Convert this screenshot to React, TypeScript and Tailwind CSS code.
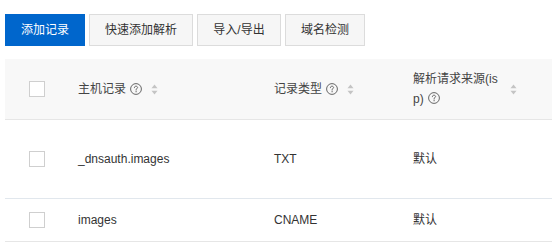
import React from "react";

const FONT = {
  fontFamily: '"Liberation Sans", "Noto Sans CJK SC", Arial, sans-serif',
};

function HelpIcon() {
  return (
    <svg width="12" height="12" viewBox="0 0 12 12" className="ml-1 shrink-0 inline-block align-[-1px]">
      <circle cx="6" cy="6" r="5.4" fill="none" stroke="#666" strokeWidth="1" />
      <path
        d="M4.4 4.7 C4.4 3.7 5.1 3.2 6 3.2 C6.9 3.2 7.6 3.8 7.6 4.6 C7.6 5.5 6.6 5.7 6.1 6.3 L6.1 7.1"
        fill="none"
        stroke="#666"
        strokeWidth="1"
        strokeLinecap="round"
      />
      <circle cx="6.1" cy="8.7" r="0.65" fill="#666" />
    </svg>
  );
}

function SortIcon() {
  return (
    <svg width="7" height="11" viewBox="0 0 7 11" className="shrink-0">
      <path d="M3.5 0.5 L6.5 4.3 L0.5 4.3 Z" fill="#c4c4c4" />
      <path d="M3.5 10.5 L6.5 6.7 L0.5 6.7 Z" fill="#c4c4c4" />
    </svg>
  );
}

function Checkbox() {
  return <div className="w-4 h-4 border border-[#cfcfcf] bg-white" />;
}

export default function App() {
  return (
    <div className="w-[552px] h-[250px] bg-white pl-[5px] pt-[14px] overflow-hidden" style={FONT}>
      <div className="flex gap-1">
        <button className="h-8 w-[80px] text-[12px] text-white bg-[#0066cc] border border-[#0066cc] leading-none">
          添加记录
        </button>
        <button className="h-8 w-[104px] text-[12px] text-[#333] bg-[#f6f6f6] border border-[#dcdcdc] leading-none">
          快速添加解析
        </button>
        <button className="h-8 w-[84px] text-[12px] text-[#333] bg-[#f6f6f6] border border-[#dcdcdc] leading-none">
          导入/导出
        </button>
        <button className="h-8 w-[80px] text-[12px] text-[#333] bg-[#f6f6f6] border border-[#dcdcdc] leading-none">
          域名检测
        </button>
      </div>

      <div className="mt-[13px] text-[12px]">
        {/* header */}
        <div className="grid grid-cols-[57px_196px_139px_1fr] h-[61px] bg-[#f8f8f8] border-b border-[#e6e6e6] text-[#444] items-center">
          <div className="pl-6">
            <Checkbox />
          </div>
          <div className="pl-4 flex items-center">
            <span>主机记录</span>
            <HelpIcon />
            <span className="ml-[9px]">
              <SortIcon />
            </span>
          </div>
          <div className="pl-4 flex items-center">
            <span>记录类型</span>
            <HelpIcon />
            <span className="ml-[9px]">
              <SortIcon />
            </span>
          </div>
          <div className="pl-4 flex items-center">
            <div className="w-[89px] break-all leading-5">
              解析请求来源(isp)
              <HelpIcon />
            </div>
            <span className="ml-2">
              <SortIcon />
            </span>
          </div>
        </div>

        {/* row 1 */}
        <div className="grid grid-cols-[57px_196px_139px_1fr] h-[79px] border-b border-[#e1e7ed] text-[#333] items-center">
          <div className="pl-6">
            <Checkbox />
          </div>
          <div className="pl-4">_dnsauth.images</div>
          <div className="pl-4">TXT</div>
          <div className="pl-4">默认</div>
        </div>

        {/* row 2 */}
        <div className="grid grid-cols-[57px_196px_139px_1fr] h-[43px] border-b border-[#e6e6e6] text-[#333] items-center">
          <div className="pl-6">
            <Checkbox />
          </div>
          <div className="pl-4">images</div>
          <div className="pl-4">CNAME</div>
          <div className="pl-4">默认</div>
        </div>
      </div>
    </div>
  );
}
